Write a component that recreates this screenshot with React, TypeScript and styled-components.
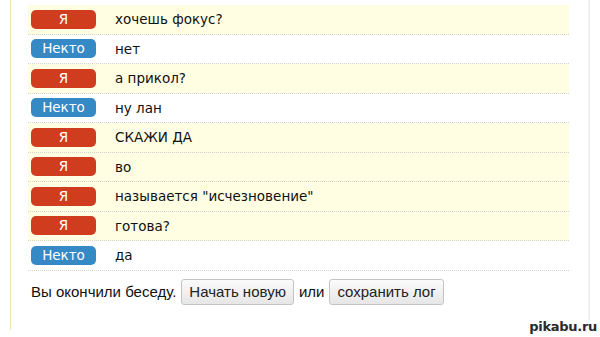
import styled, { createGlobalStyle } from 'styled-components';

const GlobalStyle = createGlobalStyle`
  html, body {
    margin: 0;
    padding: 0;
    background: #fff;
  }
  body {
    width: 600px;
    height: 337px;
    overflow: hidden;
    position: relative;
  }
`;

type Author = 'me' | 'stranger';

interface IMessage {
  author: Author;
  text: string;
}

const messages: IMessage[] = [
  { author: 'me', text: 'хочешь фокус?' },
  { author: 'stranger', text: 'нет' },
  { author: 'me', text: 'а прикол?' },
  { author: 'stranger', text: 'ну лан' },
  { author: 'me', text: 'СКАЖИ ДА' },
  { author: 'me', text: 'во' },
  { author: 'me', text: 'называется "исчезновение"' },
  { author: 'me', text: 'готова?' },
  { author: 'stranger', text: 'да' },
];

const Page = styled.div`
  display: flex;
  padding-left: 10px;
`;

const ChatFrame = styled.div`
  width: 580px;
  height: 330px;
  border-left: 1px solid #f1e5ae;
  box-sizing: border-box;
`;

const ChatPanel = styled.div`
  height: 320px;
  border-right: 2px solid #f0f0f0;
  box-sizing: border-box;
  padding: 5px 19px 0 17px;
`;

const Row = styled.div<{ $mine: boolean }>`
  display: flex;
  align-items: center;
  height: 28.5px;
  border-bottom: 1px dotted #d4d4c8;
  background: ${p => (p.$mine ? '#fffde2' : '#fff')};
`;

const Badge = styled.span<{ $mine: boolean }>`
  flex: none;
  width: 65px;
  height: 19px;
  margin-left: 3px;
  border-radius: 5px;
  background: ${p => (p.$mine ? '#cf3d1e' : '#3589c5')};
  color: #fff;
  font-family: 'DejaVu Sans', sans-serif;
  font-size: 13.5px;
  line-height: 19px;
  text-align: center;
`;

const MessageText = styled.span`
  margin-left: 19px;
  font-family: 'DejaVu Sans', sans-serif;
  font-size: 13.5px;
  color: #111;
`;

const Footer = styled.div`
  display: flex;
  align-items: center;
  gap: 5px;
  margin-top: 8px;
  padding-left: 3px;
  font-family: 'Liberation Sans', Arial, sans-serif;
  font-size: 15px;
  color: #111;
`;

const Button = styled.button`
  height: 26px;
  padding: 0 7px;
  border: 1px solid #c4c4c4;
  border-radius: 3px;
  background: linear-gradient(#fbfbfb, #e6e6e6);
  font-family: 'Liberation Sans', Arial, sans-serif;
  font-size: 15px;
  color: #222;
`;

const Watermark = styled.div`
  position: absolute;
  right: 3px;
  bottom: 3px;
  font-family: 'DejaVu Sans', sans-serif;
  font-size: 13px;
  font-weight: bold;
  letter-spacing: -0.3px;
  color: #2a2a2a;
  text-shadow: 1px 0 #fff, -1px 0 #fff, 0 1px #fff, 0 -1px #fff, 1px 1px #ddd;
`;

const App = () => (
  <>
    <GlobalStyle />
    <Page>
      <ChatFrame>
        <ChatPanel>
          {messages.map((m, i) => (
            <Row key={i} $mine={m.author === 'me'}>
              <Badge $mine={m.author === 'me'}>{m.author === 'me' ? 'Я' : 'Некто'}</Badge>
              <MessageText>{m.text}</MessageText>
            </Row>
          ))}
          <Footer>
            Вы окончили беседу.
            <Button>Начать новую</Button>
            или
            <Button>сохранить лог</Button>
          </Footer>
        </ChatPanel>
      </ChatFrame>
    </Page>
    <Watermark>pikabu.ru</Watermark>
  </>
);

export default App;
